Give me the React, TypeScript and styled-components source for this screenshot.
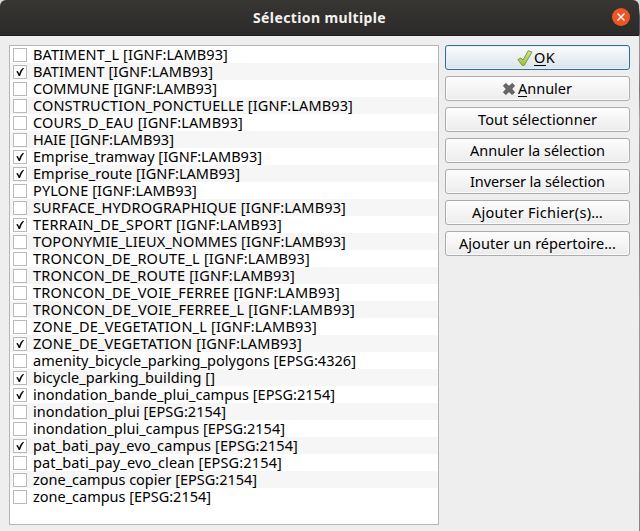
import React, { useLayoutEffect, useRef, useState } from "react";
import styled, { createGlobalStyle } from "styled-components";

const GlobalStyle = createGlobalStyle`
  * { box-sizing: border-box; }
  body { margin: 0; background: #85878a; overflow: hidden; }
`;

const Dialog = styled.div`
  display: flex;
  flex-direction: column;
  width: 640px;
  height: 531px;
  padding-right: 1px;
  background: linear-gradient(to bottom, #d8d8d8 0 8px, #55585c 16px 34px, #929496 36px 60px, #777b80 90px, #a5a6a8 120px, #77736f 200px, #9b9b9b 300px, #858585);
  font-family: "Noto Sans", "Open Sans", sans-serif;
  font-size: 14.5px;
  color: #000;
`;

const TitleBar = styled.header`
  display: grid;
  grid-template-columns: 36px 1fr 36px;
  align-items: center;
  height: 36px;
  flex: none;
  background: linear-gradient(#383633, #2c2a2a);
  border-bottom: 1px solid #1e1c1c;
  border-radius: 6px 6px 0 0;
`;

const Title = styled.h1`
  grid-column: 2;
  margin: 0;
  text-align: center;
  font-size: 14px;
  line-height: 20px;
  font-weight: 700;
  color: #f4f2ee;
`;

const CloseButton = styled.button`
  display: grid;
  place-items: center;
  width: 18px;
  height: 18px;
  margin: -1px 0 0 9px;
  padding: 0;
  border: 0;
  border-radius: 50%;
  background: #ec5524;
`;

const Content = styled.main`
  display: flex;
  flex: 1;
  gap: 6px;
  padding: 9px 9px 6px 9px;
  background: #eeeeee;
`;

const LayerList = styled.ul`
  width: 430px;
  height: 480px;
  margin: 0;
  padding: 0;
  list-style: none;
  background: #fff;
  border: 1px solid #b6b6b6;
`;

const LayerRow = styled.li`
  display: flex;
  align-items: center;
  height: 17px;
  padding-left: 3px;
  line-height: 17px;
  white-space: nowrap;
  &:nth-child(even) { background: #f6f6f6; }
`;

const CheckBox = styled.span`
  display: block;
  flex: none;
  width: 14px;
  height: 14px;
  margin-right: 6px;
  background: #fff;
  border: 1px solid #b9b9b9;
  svg { display: block; }
`;

const Actions = styled.aside`
  display: flex;
  flex-direction: column;
  gap: 6px;
  width: 185px;
`;

const ActionButton = styled.button<{ $primary?: boolean }>`
  display: flex;
  align-items: center;
  justify-content: flex-start;
  height: 25px;
  padding: 0;
  border: 1px solid ${(p) => (p.$primary ? "#2e6d96" : "#acacac")};
  border-radius: 3px;
  background: ${(p) => (p.$primary ? "linear-gradient(#fbfcfd, #dbe3e9)" : "linear-gradient(#fdfdfd, #ececec)")};
  box-shadow: inset 0 0 0 1px ${(p) => (p.$primary ? "#e9f1f6" : "#fbfbfb")};
  font: inherit;
  line-height: 20px;
  color: inherit;
`;

const ButtonIcon = styled.span<{ $left: number; $size: number }>`
  flex: none;
  width: ${(p) => p.$size}px;
  height: ${(p) => p.$size}px;
  margin-left: ${(p) => p.$left}px;
  svg { display: block; }
`;

const ButtonText = styled.span<{ $left: number }>`
  margin-left: ${(p) => p.$left}px;
  margin-bottom: 2px;
`;

const Mnemonic = styled.span`
  box-shadow: inset 0 -1px 0 #000;
  display: inline-block;
  height: 19px;
`;

const Label = styled.span`
  display: inline-block;
  white-space: pre;
`;

/** Label tracked so that its text spans the given width. */
function FittedLabel({ width, children }: { width: number; children: React.ReactNode }) {
  const ref = useRef<HTMLSpanElement>(null);
  const [spacing, setSpacing] = useState(0);
  useLayoutEffect(() => {
    const el = ref.current;
    if (!el) return;
    const count = (el.textContent ?? "").length;
    setSpacing((width - el.getBoundingClientRect().width) / count);
  }, [width]);
  return (
    <Label ref={ref} style={{ letterSpacing: spacing }}>
      {children}
    </Label>
  );
}

type Layer = { name: string; width: number; checked?: boolean };

const layers: Layer[] = [
  { name: "BATIMENT_L [IGNF:LAMB93]", width: 195 },
  { name: "BATIMENT [IGNF:LAMB93]", width: 180, checked: true },
  { name: "COMMUNE [IGNF:LAMB93]", width: 184 },
  { name: "CONSTRUCTION_PONCTUELLE [IGNF:LAMB93]", width: 320 },
  { name: "COURS_D_EAU [IGNF:LAMB93]", width: 210 },
  { name: "HAIE [IGNF:LAMB93]", width: 141 },
  { name: "Emprise_tramway [IGNF:LAMB93]", width: 229, checked: true },
  { name: "Emprise_route [IGNF:LAMB93]", width: 207, checked: true },
  { name: "PYLONE [IGNF:LAMB93]", width: 164 },
  { name: "SURFACE_HYDROGRAPHIQUE [IGNF:LAMB93]", width: 313 },
  { name: "TERRAIN_DE_SPORT [IGNF:LAMB93]", width: 249, checked: true },
  { name: "TOPONYMIE_LIEUX_NOMMES [IGNF:LAMB93]", width: 313 },
  { name: "TRONCON_DE_ROUTE_L [IGNF:LAMB93]", width: 277 },
  { name: "TRONCON_DE_ROUTE [IGNF:LAMB93]", width: 262 },
  { name: "TRONCON_DE_VOIE_FERREE [IGNF:LAMB93]", width: 307 },
  { name: "TRONCON_DE_VOIE_FERREE_L [IGNF:LAMB93]", width: 322 },
  { name: "ZONE_DE_VEGETATION_L [IGNF:LAMB93]", width: 284 },
  { name: "ZONE_DE_VEGETATION [IGNF:LAMB93]", width: 269, checked: true },
  { name: "amenity_bicycle_parking_polygons [EPSG:4326]", width: 323 },
  { name: "bicycle_parking_building []", width: 182, checked: true },
  { name: "inondation_bande_plui_campus [EPSG:2154]", width: 302, checked: true },
  { name: "inondation_plui [EPSG:2154]", width: 193 },
  { name: "inondation_plui_campus [EPSG:2154]", width: 252 },
  { name: "pat_bati_pay_evo_campus [EPSG:2154]", width: 265, checked: true },
  { name: "pat_bati_pay_evo_clean [EPSG:2154]", width: 249 },
  { name: "zone_campus copier [EPSG:2154]", width: 224 },
  { name: "zone_campus [EPSG:2154]", width: 178 },
];

const actions = [
  { text: "Tout sélectionner", left: 32, width: 119 },
  { text: "Annuler la sélection", left: 24, width: 135 },
  { text: "Inverser la sélection", left: 24, width: 135 },
  { text: "Ajouter Fichier(s)…", left: 26, width: 131 },
  { text: "Ajouter un répertoire...", left: 13, width: 157 },
];

const CheckMark = () => (
  <svg width="12" height="12" viewBox="0 0 12 12">
    <path d="M2.2 5.6 3.8 5 5.2 7.7C6 5.2 7.2 3 9.1 1.7L10 2.2C8.2 4.4 7 7 6 10H4.7C4 8.3 3.2 6.8 2.2 5.6Z" fill="#080808" />
  </svg>
);

const OkIcon = () => (
  <svg width="16" height="16" viewBox="0 0 16 16">
    <defs>
      <linearGradient id="leaf" x1="0" y1="0" x2="0" y2="1">
        <stop offset="0" stopColor="#d5e58b" />
        <stop offset="1" stopColor="#9cc234" />
      </linearGradient>
    </defs>
    <path d="M.9 9.6 4 7.9 6 10.1 11.3.6 15 2.1 7.2 15.4H5.2Z" fill="url(#leaf)" stroke="#71903f" strokeWidth=".9" strokeLinejoin="round" />
  </svg>
);

const CancelIcon = () => (
  <svg width="14" height="14" viewBox="0 0 14 14">
    <path d="m3.8 1.5 3.2 3 3.2-3 2.3 2.3L9.6 7l2.9 3.2-2.3 2.3-3.2-3-3.2 3-2.3-2.3L4.4 7 1.5 3.8Z" fill="#686868" stroke="#505050" strokeLinejoin="round" />
  </svg>
);

export default function App() {
  return (
    <>
      <GlobalStyle />
      <Dialog>
        <TitleBar>
          <Title><FittedLabel width={133}>Sélection multiple</FittedLabel></Title>
          <CloseButton aria-label="Fermer">
            <svg width="10" height="10" viewBox="0 0 10 10">
              <path d="m1.5 1.5 7 7m0-7-7 7" stroke="#fff" strokeWidth="1.4" />
            </svg>
          </CloseButton>
        </TitleBar>
        <Content>
          <LayerList>
            {layers.map((layer) => (
              <LayerRow key={layer.name}>
                <CheckBox>{layer.checked && <CheckMark />}</CheckBox>
                <FittedLabel width={layer.width}>{layer.name}</FittedLabel>
              </LayerRow>
            ))}
          </LayerList>
          <Actions>
            <ActionButton $primary>
              <ButtonIcon $left={71} $size={16}><OkIcon /></ButtonIcon>
              <ButtonText $left={1}>
                <FittedLabel width={21}><Mnemonic>O</Mnemonic>K</FittedLabel>
              </ButtonText>
            </ActionButton>
            <ActionButton>
              <ButtonIcon $left={56} $size={14}><CancelIcon /></ButtonIcon>
              <ButtonText $left={2}>
                <FittedLabel width={54}><Mnemonic>A</Mnemonic>nnuler</FittedLabel>
              </ButtonText>
            </ActionButton>
            {actions.map((action) => (
              <ActionButton key={action.text}>
                <ButtonText $left={action.left}>
                  <FittedLabel width={action.width}>{action.text}</FittedLabel>
                </ButtonText>
              </ActionButton>
            ))}
          </Actions>
        </Content>
      </Dialog>
    </>
  );
}
